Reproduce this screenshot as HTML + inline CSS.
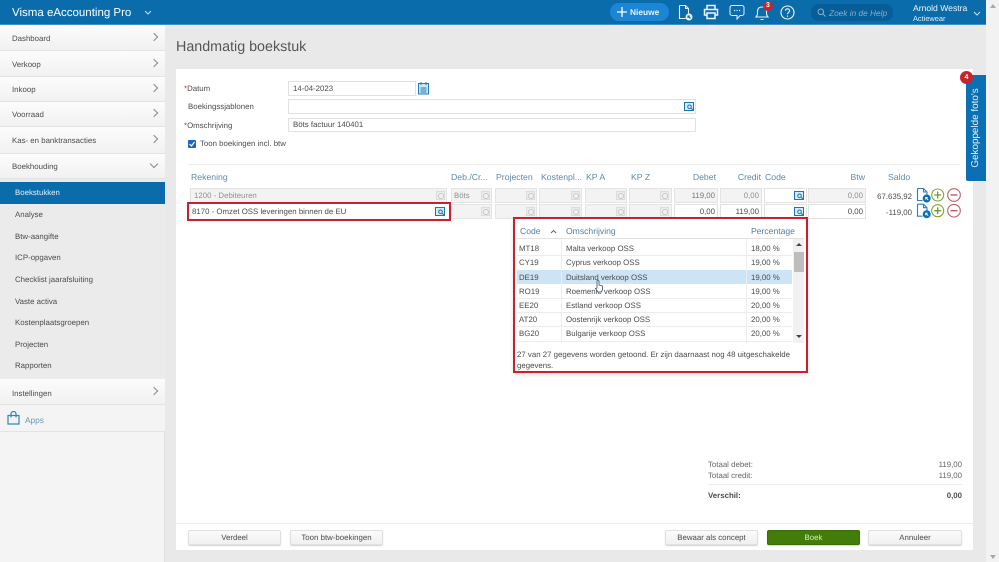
<!DOCTYPE html>
<html lang="nl">
<head>
<meta charset="utf-8">
<title>Handmatig boekstuk</title>
<style>
*{box-sizing:border-box}
html{background:#e9e9e9}
html,body{margin:0;padding:0;width:999px;height:562px;overflow:hidden}
body{background:#e9e9e9;font-family:"Liberation Sans",sans-serif;font-size:7.85px;color:#4c4c4c;filter:blur(.3px);text-rendering:geometricPrecision}
.a,.t,.f,.b,.n,svg{position:absolute}
.t{white-space:nowrap;line-height:14px;height:14px}
.r{text-align:right}
.n{left:0;width:165px;background:linear-gradient(#fcfcfc,#f1f1f1);border-bottom:1px solid #e3e3e3}
.n span{position:absolute;left:12px;top:50%;margin-top:-5px;line-height:12px;white-space:nowrap}
.n i{position:absolute;right:8px;top:50%;margin-top:-4px;width:6px;height:6px;border-top:1px solid #8a8a8a;border-right:1px solid #8a8a8a;transform:rotate(45deg)}
.s{left:15px}
.f{background:#fff;border:1px solid #e1e1e1;height:15px;line-height:13px;padding:0 4px;white-space:nowrap}
.d{background:#f3f3f3;border-color:#e4e4e4;color:#919191}
.h{color:#5f8aa5;font-size:8.7px;line-height:10px}
.p{color:#557f9c;font-size:8.6px;line-height:12px}
.b{height:15px;border:1px solid #e0e0e0;border-radius:2px;background:linear-gradient(#fbfbfb,#f0f0f0);text-align:center;line-height:13px;box-shadow:0 1px 1px #d4d4d4}
.sq{position:absolute;width:9px;height:9px;border:1px solid #dcdcdc;background:#ececec}
.sq:after{content:"";position:absolute;right:0;bottom:0;width:4px;height:4px;border:1px solid #c8c8c8;border-radius:50%;background:#f2f2f2}
.l{background:#ececec;height:1px}
.w{color:#fff}
</style>
</head>
<body>
<!-- header -->
<div class="a" style="left:0;top:0;width:986px;height:25px;background:#0a6cab;border-bottom:1px solid #3d92c8"></div>
<div class="t w" style="left:12px;top:6px;font-size:11.5px;line-height:14px">Visma eAccounting Pro</div>
<svg style="left:144px;top:10px" width="8" height="6"><path d="M1 1l3 3 3-3" fill="none" stroke="#cfe4f2" stroke-width="1"/></svg>
<div class="a" style="left:610px;top:3px;width:59px;height:18px;border-radius:9px;background:#1c86d6"></div>
<svg style="left:617px;top:7px" width="10" height="10"><path d="M5 0v10M0 5h10" stroke="#fff" stroke-width="1.3"/></svg>
<div class="t w" style="left:630px;top:5px;font-weight:bold;font-size:8.4px;color:#e8f3fb">Nieuwe</div>
<svg style="left:677px;top:4px" width="17" height="17" fill="none" stroke="#e9f3fa" stroke-width="1.1"><path d="M2.500 1.500h6l3 3v5M2.500 1.500v13h6M8.500 1.500v3h3"/><circle cx="12" cy="13" r="3.500" fill="#e9f3fa" stroke="none"/><path d="M13.500 14.500l-2.500-2.500M11 14v-2h2" stroke="#0a6cab"/></svg>
<svg style="left:703px;top:4px" width="16" height="16" fill="none" stroke="#eef6fb" stroke-width="1.5"><path d="M4 5V1.500h8V5M4 11H1.500V5.500h13V11H12"/><path d="M4 9h8v5.500H4z"/></svg>
<svg style="left:729px;top:4px" width="16" height="17" fill="none" stroke="#e4f0f8" stroke-width="1"><path d="M3 1.500h10a2 2 0 0 1 2 2v6a2 2 0 0 1-2 2h-2l-3 3.500v-3.500H3a2 2 0 0 1-2-2v-6a2 2 0 0 1 2-2z"/><path d="M5 6.500h1.200M7.500 6.500h1.200M10 6.500h1.200" stroke-width="1.300"/></svg>
<svg style="left:754px;top:4px" width="16" height="17" fill="none" stroke="#e9f3fa" stroke-width="1.1"><path d="M2 13c1.500-1.500 1.500-3 1.500-5.500C3.500 4.500 5 3 8 3s4.500 1.500 4.500 4.500c0 2.500 0 4 1.500 5.500zM6.500 15.500h3"/></svg>
<div class="a" style="left:763px;top:1px;width:10px;height:10px;border-radius:50%;background:#c5262e;color:#fff;font-size:7px;line-height:10px;text-align:center;font-weight:bold">3</div>
<svg style="left:780px;top:5px" width="15" height="15" fill="none" stroke="#f0f7fb" stroke-width="1.100"><circle cx="7.500" cy="7.500" r="6.500"/><path d="M5.500 5.800c0-2.600 4-2.600 4 0 0 1.700-2 1.500-2 3.300M7.500 10.500v1.200"/></svg>
<div class="a" style="left:811px;top:4px;width:82px;height:17px;border-radius:8px;background:#065d97"></div>
<svg style="left:817px;top:8px" width="9" height="9" fill="none" stroke="#87b3cf"><circle cx="3.800" cy="3.800" r="2.800"/><path d="M6 6l2.500 2.500"/></svg>
<div class="t" style="left:829px;top:6px;font-style:italic;color:#84aecb;font-size:8.300px">Zoek in de Help</div>
<div class="t" style="left:913px;top:.5px;color:#eef6fb;font-size:8.600px">Arnold Westra</div>
<div class="t" style="left:913px;top:11.500px;color:#e3f0f8;font-size:7.400px">Actiewear</div>
<svg style="left:973px;top:11px" width="8" height="6"><path d="M1 1l3 3 3-3" fill="none" stroke="#cfe4f2"/></svg>

<!-- page scrollbar -->
<div class="a" style="left:986px;top:0;width:13px;height:562px;background:#f2f2f2"></div>
<div class="a" style="left:990px;top:4px;border:3px solid transparent;border-bottom:4px solid #a8a8a8;border-top:0"></div>
<div class="a" style="left:990px;top:555px;border:3px solid transparent;border-top:4px solid #a8a8a8;border-bottom:0"></div>

<!-- sidebar -->
<div class="a" style="left:0;top:25px;width:165px;height:537px;background:#f4f4f4;border-right:1px solid #e0e0e0"></div>
<div class="n" style="top:25px;height:26px"><span>Dashboard</span><i></i></div>
<div class="n" style="top:51px;height:26px"><span>Verkoop</span><i></i></div>
<div class="n" style="top:77px;height:25px"><span>Inkoop</span><i></i></div>
<div class="n" style="top:102px;height:25px"><span>Voorraad</span><i></i></div>
<div class="n" style="top:127px;height:27px"><span>Kas- en banktransacties</span><i></i></div>
<div class="n" style="top:154px;height:25px"><span>Boekhouding</span><i style="transform:rotate(135deg);margin-top:-5px"></i></div>
<div class="a" style="left:0;top:179px;width:165px;height:200px;background:#ebebeb"></div>
<div class="a" style="left:0;top:182px;width:165px;height:22px;background:#0a6cab"></div>
<div class="t s" style="top:186px;color:#e2eff8">Boekstukken</div>
<div class="t s" style="top:208px">Analyse</div>
<div class="t s" style="top:230px">Btw-aangifte</div>
<div class="t s" style="top:251px">ICP-opgaven</div>
<div class="t s" style="top:273px">Checklist jaarafsluiting</div>
<div class="t s" style="top:295px">Vaste activa</div>
<div class="t s" style="top:316px">Kostenplaatsgroepen</div>
<div class="t s" style="top:338px">Projecten</div>
<div class="t s" style="top:359px">Rapporten</div>
<div class="n" style="top:379px;height:26px"><span style="margin-top:-4px">Instellingen</span><i></i></div>
<div class="n" style="top:405px;height:27px;background:#f4f4f4"><span style="left:25px;margin-top:-4px;color:#6d9ab8;font-size:8.300px">Apps</span></div>
<svg style="left:7px;top:411px" width="13" height="14" fill="none" stroke="#2a8bb5" stroke-width="1.200"><path d="M1 4.500h11v8.500H1zM4 6.500V3a2.500 2.500 0 0 1 5 0v3.500"/></svg>

<!-- content -->
<div class="t" style="left:176px;top:37px;height:20px;line-height:20px;font-size:14.300px;color:#555">Handmatig boekstuk</div>
<div class="a" style="left:176px;top:69px;width:797px;height:481px;background:#fff"></div>

<div class="t" style="left:184px;top:82px"><span style="color:#c0392b">*</span>Datum</div>
<div class="f" style="left:288px;top:81px;width:128px">14-04-2023</div>
<svg style="left:418px;top:81px" width="11" height="14" fill="#cfe6f2" stroke="#1f7fb5"><rect x=".5" y="2.500" width="10" height="10.500"/><path d="M3 1v3M8 1v3M2.500 7h6M2.500 9h6M2.500 11h6"/></svg>
<div class="t" style="left:188px;top:100px">Boekingssjablonen</div>
<div class="f" style="left:288px;top:99px;width:408px"></div>
<svg style="left:684px;top:101px" width="10" height="10" fill="#d7eaf5" stroke="#1b77ad"><rect x=".5" y="1.500" width="9" height="8"/><circle cx="5.500" cy="5.800" r="1.800" fill="none"/><path d="M7 7l2 2"/></svg>
<div class="t" style="left:184px;top:119px"><span style="color:#c0392b">*</span>Omschrijving</div>
<div class="f" style="left:288px;top:118px;width:408px;height:14px;line-height:12px">Böts factuur 140401</div>
<div class="a" style="left:188px;top:140px;width:8px;height:8px;background:#1a66c4;border-radius:1px"></div>
<svg style="left:188px;top:140px" width="8" height="8"><path d="M1.500 4l2 2 3-4" fill="none" stroke="#fff" stroke-width="1.200"/></svg>
<div class="t" style="left:200px;top:137px">Toon boekingen incl. btw</div>
<div class="a l" style="left:188px;top:164px;width:772px"></div>

<!-- grid headers -->
<div class="t h" style="left:191px;top:172px">Rekening</div>
<div class="t h" style="left:451px;top:172px">Deb./Cr...</div>
<div class="t h" style="left:496px;top:172px">Projecten</div>
<div class="t h" style="left:541px;top:172px">Kostenpl...</div>
<div class="t h" style="left:586px;top:172px">KP A</div>
<div class="t h" style="left:631px;top:172px">KP Z</div>
<div class="t h r" style="left:674px;top:172px;width:42px">Debet</div>
<div class="t h r" style="left:720px;top:172px;width:41px">Credit</div>
<div class="t h" style="left:765px;top:172px">Code</div>
<div class="t h r" style="left:808px;top:172px;width:57px">Btw</div>
<div class="t h" style="left:888px;top:172px">Saldo</div>

<!-- row 1 -->
<div class="f d" style="left:190px;top:188px;width:257px;padding-left:3px">1200 - Debiteuren</div><i class="sq" style="left:436px;top:191px"></i>
<div class="f d" style="left:451px;top:188px;width:41px;padding-left:2px">Böts</div><i class="sq" style="left:481px;top:191px"></i>
<div class="f d" style="left:495px;top:188px;width:42px"></div><i class="sq" style="left:526px;top:191px"></i>
<div class="f d" style="left:539px;top:188px;width:43px"></div><i class="sq" style="left:571px;top:191px"></i>
<div class="f d" style="left:585px;top:188px;width:42px"></div><i class="sq" style="left:616px;top:191px"></i>
<div class="f d r" style="left:629px;top:188px;width:43px"></div><i class="sq" style="left:660px;top:191px"></i>
<div class="f d r" style="left:674px;top:188px;width:44px;padding:0 2px;color:#777">119,00</div>
<div class="f d r" style="left:720px;top:188px;width:42px;padding:0 2px">0,00</div>
<div class="f" style="left:764px;top:188px;width:43px"></div>
<svg style="left:794px;top:190px" width="10" height="10" fill="#d7eaf5" stroke="#1b77ad"><rect x=".5" y="1.500" width="9" height="8"/><circle cx="5.500" cy="5.800" r="1.800" fill="none"/><path d="M7 7l2 2"/></svg>
<div class="f d r" style="left:808px;top:188px;width:58px;padding:0 2px">0,00</div>
<div class="t r" style="left:870px;top:190px;width:42px">67.635,92</div>

<!-- row 2 -->
<div class="f" style="left:190px;top:204px;width:257px;border-color:#fff;padding-left:1px">8170 - Omzet OSS leveringen binnen de EU</div>
<svg style="left:435px;top:206px" width="10" height="10" fill="#d7eaf5" stroke="#1b77ad"><rect x=".5" y="1.500" width="9" height="8"/><circle cx="5.500" cy="5.800" r="1.800" fill="none"/><path d="M7 7l2 2"/></svg>
<div class="a" style="left:187px;top:202px;width:264px;height:19px;border:2.500px solid #c8202f"></div>
<div class="f d" style="left:451px;top:204px;width:41px"></div><i class="sq" style="left:481px;top:207px"></i>
<div class="f d" style="left:495px;top:204px;width:42px"></div><i class="sq" style="left:526px;top:207px"></i>
<div class="f d" style="left:539px;top:204px;width:43px"></div><i class="sq" style="left:571px;top:207px"></i>
<div class="f d" style="left:585px;top:204px;width:42px"></div><i class="sq" style="left:616px;top:207px"></i>
<div class="f d" style="left:629px;top:204px;width:43px"></div><i class="sq" style="left:660px;top:207px"></i>
<div class="f r" style="left:674px;top:204px;width:44px;padding:0 2px">0,00</div>
<div class="f r" style="left:720px;top:204px;width:42px;padding:0 2px">119,00</div>
<div class="f" style="left:764px;top:204px;width:43px"></div>
<svg style="left:794px;top:206px" width="10" height="10" fill="#d7eaf5" stroke="#1b77ad"><rect x=".5" y="1.500" width="9" height="8"/><circle cx="5.500" cy="5.800" r="1.800" fill="none"/><path d="M7 7l2 2"/></svg>
<div class="f r" style="left:808px;top:204px;width:58px;padding:0 2px">0,00</div>
<div class="t r" style="left:870px;top:206px;width:42px">-119,00</div>

<!-- row actions -->
<svg style="left:915px;top:187px" width="47" height="33" fill="none">
<g>
<path d="M2.500 1.500h6l3.500 3.500v3M2.500 1.500v12h5M8.500 1.500v3.500H12" stroke="#2f7fb5" stroke-width="1.100"/>
<circle cx="11.700" cy="11.500" r="4" fill="#0e6fb0"/><path d="M13.200 13l-2.500-2.500M10.700 12.500v-2h2" stroke="#fff" stroke-width=".9"/>
<circle cx="22.700" cy="8" r="6" stroke="#7fa432" stroke-width="1.100"/><path d="M22.700 4.500v7M19.200 8h7" stroke="#6f9a2e" stroke-width="1.300"/>
<circle cx="39" cy="8" r="6.300" stroke="#b8606a" stroke-width="1.100"/><path d="M35.500 8h7" stroke="#b8505c" stroke-width="1.300"/>
</g>
<g transform="translate(0,15.700)">
<path d="M2.500 1.500h6l3.500 3.500v3M2.500 1.500v12h5M8.500 1.500v3.500H12" stroke="#2f7fb5" stroke-width="1.100"/>
<circle cx="11.700" cy="11.500" r="4" fill="#0e6fb0"/><path d="M13.200 13l-2.500-2.500M10.700 12.500v-2h2" stroke="#fff" stroke-width=".9"/>
<circle cx="22.700" cy="8" r="6" stroke="#7fa432" stroke-width="1.100"/><path d="M22.700 4.500v7M19.200 8h7" stroke="#6f9a2e" stroke-width="1.300"/>
<circle cx="39" cy="8" r="6.300" stroke="#b8606a" stroke-width="1.100"/><path d="M35.500 8h7" stroke="#b8505c" stroke-width="1.300"/>
</g>
</svg>

<!-- side tab -->
<div class="a" style="left:966px;top:75px;width:20px;height:106px;background:#0b6fb3;border-radius:2px 0 0 2px"></div>
<div class="t" style="left:976px;top:128px;width:100px;margin-left:-50px;margin-top:-7px;text-align:center;color:#e6f2fa;font-size:9.900px;transform:rotate(-90deg)">Gekoppelde foto's</div>
<div class="a" style="left:960px;top:71px;width:13px;height:13px;border-radius:50%;background:#c5262e;color:#fff;font-size:7px;font-weight:bold;line-height:13px;text-align:center">4</div>

<!-- popup -->
<div class="a" style="left:513px;top:217px;width:295px;height:156px;background:#fff;border:2.500px solid #c8202f;box-shadow:0 2px 4px rgba(0,0,0,.12)"></div>
<div class="t p" style="left:520px;top:225px">Code</div>
<svg style="left:550px;top:229px" width="7" height="5"><path d="M1 4l2.500-2.500L6 4" fill="none" stroke="#666"/></svg>
<div class="t p" style="left:566px;top:225px">Omschrijving</div>
<div class="t p" style="left:751px;top:225px">Percentage</div>
<div class="a" style="left:517px;top:238px;width:287px;height:1px;background:#e2e2e2"></div>
<div class="a" style="left:517px;top:270px;width:275px;height:14px;background:#cce4f5"></div>
<div class="a" style="left:561px;top:239px;width:1px;height:104px;background:#ededed"></div>
<div class="a" style="left:746px;top:239px;width:1px;height:104px;background:#ededed"></div>
<div class="a l" style="left:517px;top:255px;width:275px"></div>
<div class="a l" style="left:517px;top:298px;width:275px"></div>
<div class="a l" style="left:517px;top:312px;width:275px"></div>
<div class="a l" style="left:517px;top:326px;width:275px"></div>
<div class="a l" style="left:517px;top:341px;width:275px"></div>
<div class="a" style="left:793px;top:239px;width:11px;height:104px;background:#f1f1f1"></div>
<div class="a" style="left:794px;top:252px;width:10px;height:20px;background:#bdbdbd"></div>
<div class="a" style="left:796px;top:243px;border:3px solid transparent;border-bottom:3px solid #444;border-top:0"></div>
<div class="a" style="left:796px;top:335px;border:3px solid transparent;border-top:3px solid #444;border-bottom:0"></div>

<div class="t" style="left:519px;top:242px">MT18</div><div class="t" style="left:566px;top:242px">Malta verkoop OSS</div><div class="t" style="left:751px;top:242px">18,00 %</div>
<div class="t" style="left:519px;top:256px">CY19</div><div class="t" style="left:566px;top:256px">Cyprus verkoop OSS</div><div class="t" style="left:751px;top:256px">19,00 %</div>
<div class="t" style="left:519px;top:271px">DE19</div><div class="t" style="left:566px;top:271px">Duitsland verkoop OSS</div><div class="t" style="left:751px;top:271px">19,00 %</div>
<div class="t" style="left:519px;top:285px">RO19</div><div class="t" style="left:566px;top:285px">Roemenië verkoop OSS</div><div class="t" style="left:751px;top:285px">19,00 %</div>
<div class="t" style="left:519px;top:299px">EE20</div><div class="t" style="left:566px;top:299px">Estland verkoop OSS</div><div class="t" style="left:751px;top:299px">20,00 %</div>
<div class="t" style="left:519px;top:313px">AT20</div><div class="t" style="left:566px;top:313px">Oostenrijk verkoop OSS</div><div class="t" style="left:751px;top:313px">20,00 %</div>
<div class="t" style="left:519px;top:327px">BG20</div><div class="t" style="left:566px;top:327px">Bulgarije verkoop OSS</div><div class="t" style="left:751px;top:327px">20,00 %</div>
<svg style="left:594px;top:279px" width="10" height="14"><path d="M3 9V2.500a1 1 0 0 1 2 0V6l3.500 1v3.500L7.500 13H4L1.500 9.500 3 9z" fill="#fff" stroke="#35495e" stroke-width=".8"/></svg>
<div class="t" style="left:517px;top:348px">27 van 27 gegevens worden getoond. Er zijn daarnaast nog 48 uitgeschakelde</div>
<div class="t" style="left:517px;top:359px">gegevens.</div>

<!-- totals -->
<div class="t" style="left:708px;top:458px;color:#666">Totaal debet:</div><div class="t r" style="left:900px;top:458px;width:62px;color:#666">119,00</div>
<div class="t" style="left:708px;top:469px;color:#666">Totaal credit:</div><div class="t r" style="left:900px;top:469px;width:62px;color:#666">119,00</div>
<div class="a l" style="left:708px;top:484px;width:254px"></div>
<div class="t" style="left:708px;top:489px;font-weight:bold">Verschil:</div><div class="t r" style="left:900px;top:489px;width:62px;font-weight:bold">0,00</div>

<!-- footer -->
<div class="a l" style="left:176px;top:523px;width:797px"></div>
<div class="b" style="left:188px;top:530px;width:93px">Verdeel</div>
<div class="b" style="left:290px;top:530px;width:93px">Toon btw-boekingen</div>
<div class="b" style="left:665px;top:530px;width:93px">Bewaar als concept</div>
<div class="b" style="left:767px;top:530px;width:93px;background:#437d09;border-color:#3a6f08;color:#d8ecc0">Boek</div>
<div class="b" style="left:868px;top:530px;width:94px">Annuleer</div>
</body>
</html>
